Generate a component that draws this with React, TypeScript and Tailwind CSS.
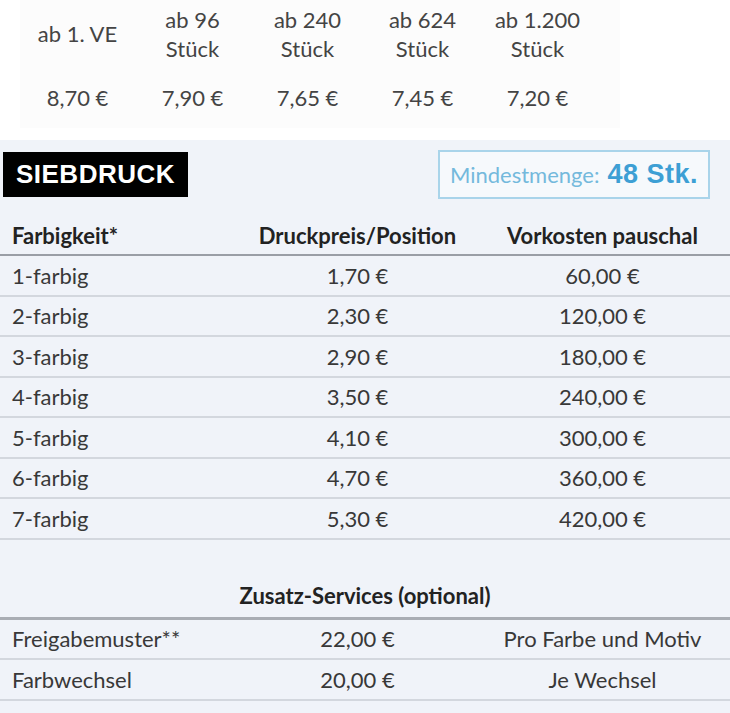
import React from 'react'

const font = { fontFamily: 'Lato, "Liberation Sans", sans-serif' }
const arial = { fontFamily: '"Liberation Sans", Arial, sans-serif' }

const tiers = [
  { label: ['ab 1. VE'], price: '8,70 €' },
  { label: ['ab 96', 'Stück'], price: '7,90 €' },
  { label: ['ab 240', 'Stück'], price: '7,65 €' },
  { label: ['ab 624', 'Stück'], price: '7,45 €' },
  { label: ['ab 1.200', 'Stück'], price: '7,20 €' },
]

const rows = [
  ['1-farbig', '1,70 €', '60,00 €'],
  ['2-farbig', '2,30 €', '120,00 €'],
  ['3-farbig', '2,90 €', '180,00 €'],
  ['4-farbig', '3,50 €', '240,00 €'],
  ['5-farbig', '4,10 €', '300,00 €'],
  ['6-farbig', '4,70 €', '360,00 €'],
  ['7-farbig', '5,30 €', '420,00 €'],
]

const extras = [
  ['Freigabemuster**', '22,00 €', 'Pro Farbe und Motiv'],
  ['Farbwechsel', '20,00 €', 'Je Wechsel'],
]

const Row = ({ cells }: { cells: string[] }) => (
  <div className="grid h-[40.5px] grid-cols-[240px_235px_1fr] items-center border-b-2 border-[#d3d7de] text-[22px] text-[#383838]">
    <span className="pl-3">{cells[0]}</span>
    <span className="text-center">{cells[1]}</span>
    <span className="text-center">{cells[2]}</span>
  </div>
)

const App = () => {
  return (
    <div className="h-[713px] w-[730px] overflow-hidden bg-white" style={font}>
      <div className="h-[140px] pl-5">
        <div className="grid w-[600px] grid-cols-[115px_115px_115px_115px_115px] bg-[#fcfcfc] text-[22px] leading-[29px] text-[#444]">
          {tiers.map(({ label }) => (
            <div key={label[0]} className="flex h-[67px] flex-col items-center justify-center">
              {label.map((l) => (
                <span key={l}>{l}</span>
              ))}
            </div>
          ))}
          {tiers.map(({ label, price }) => (
            <div key={label[0] + price} className="flex h-[61px] items-center justify-center">
              {price}
            </div>
          ))}
        </div>
      </div>

      <div className="h-[573px] bg-[#f0f3f9]">
        <div className="flex items-start justify-between pt-[10px] pr-5 pl-[3px]">
          <div
            className="mt-[2px] flex h-[45px] w-[185px] items-center justify-center bg-black text-[26px] font-bold tracking-[0.5px] text-white"
            style={arial}
          >
            SIEBDRUCK
          </div>
          <div className="flex h-[49px] w-[272px] items-center justify-center gap-2 border-2 border-[#a9d4ea] bg-[#f6f9fc]">
            <span className="text-[22px] text-[#74b9dc]">Mindestmenge:</span>
            <span className="text-[27px] font-bold tracking-[0.5px] text-[#3d9fd4]" style={arial}>
              48 Stk.
            </span>
          </div>
        </div>

        <div className="mt-[18px] grid h-[39px] grid-cols-[240px_235px_1fr] items-center border-b-2 border-[#9a9ea6] text-[22px] font-bold text-[#222]">
          <span className="pl-3">Farbigkeit*</span>
          <span className="text-center">Druckpreis/Position</span>
          <span className="text-center">Vorkosten pauschal</span>
        </div>
        {rows.map((r) => (
          <Row key={r[0]} cells={r} />
        ))}

        <div className="flex h-[77px] items-end justify-center pb-[5px] text-[22px] font-bold text-[#222]">
          Zusatz-Services (optional)
        </div>
        <div className="border-b-[3px] border-[#a9adb4]" />
        {extras.map((r) => (
          <Row key={r[0]} cells={r} />
        ))}
      </div>
    </div>
  )
}

export default App
